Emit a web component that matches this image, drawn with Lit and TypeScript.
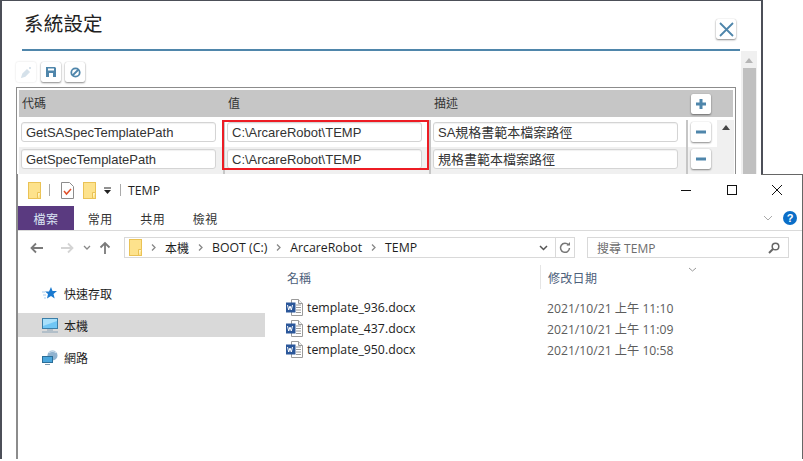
import { LitElement, html, css, svg } from "lit";
import { customElement } from "lit/decorators.js";

const folder = svg`<svg width="13" height="17" viewBox="0 0 13 17"><rect x=".5" y=".5" width="12" height="16" fill="#fde28c" stroke="#eac255"/><path d="M9.5 16.5V10.5H12.5" fill="#fff3c4" stroke="#eac255"/></svg>`;
const word = svg`<svg width="17" height="17" viewBox="0 0 17 17"><path d="M5.5.5h7l4 4v12h-11z" fill="#fff" stroke="#9a9a9a"/><path d="M12.5.5v4h4" fill="#eee" stroke="#9a9a9a"/><path d="M10 6h5M10 8.500h5M10 11h5M10 13.500h5" stroke="#9a9a9a"/><rect y="3.500" width="9.500" height="10" fill="#2b579a"/><path d="M1.500 6l1.200 5 1.300-4 1.300 4 1.200-5" fill="none" stroke="#fff" stroke-width="1"/></svg>`;
const crumb = svg`<svg width="5" height="7" viewBox="0 0 5 7"><path d="M1 .5L4 3.500 1 6.500" fill="none" stroke="#888" stroke-width="1.300"/></svg>`;

@customElement("app-root")
export class AppRoot extends LitElement {
  static styles = css`
    :host { display: block; width: 803px; height: 461px; background: #fff; overflow: hidden; font-family: "Liberation Sans", "Noto Sans CJK TC", sans-serif; }
    .stage { position: relative; width: 803px; height: 461px; }
    svg { display: block; flex: none; }
    .dialog { position: absolute; left: 0; top: 0; width: 759px; height: 458px; background: #fff; border: solid #4c4f58; border-width: 1px 2px 0 2px; }
    .dlg-head { display: flex; justify-content: space-between; align-items: center; height: 48px; margin: 0 21px 0 20px; padding: 0 4px 0 2px; border-bottom: 2px solid #4f86ab; }
    .title { font-size: 19.500px; line-height: 26px; color: #222; letter-spacing: .2px; margin-top: -5px; font-family: "Noto Sans CJK TC", sans-serif; }
    .btn { display: flex; align-items: center; justify-content: center; width: 20px; height: 20px; background: #fff; border-radius: 2px; box-shadow: 0 1px 2px rgba(0,0,0,.45), 0 0 1px rgba(0,0,0,.2); }
    .btn.off { box-shadow: 0 0 2px rgba(0,0,0,.15); }
    .close { margin-top: 8px; }
    .dlg-body { display: flex; }
    .dlg-main { width: 739px; padding: 11px 0 0 14px; box-sizing: border-box; }
    .tools { display: flex; gap: 4.500px; height: 20px; }
    .table { width: 720px; margin-top: 5px; height: 140px; box-sizing: border-box; padding: 2px; border: 1px solid #8c8c8c; border-bottom: 0; }
    .thead, .row { display: grid; grid-template-columns: 204px 206px 257px 31px 17px; }
    .thead { height: 27px; background: #c6c6c6; font-size: 12px; color: #333; align-items: center; margin-bottom: 3px; font-family: "Noto Sans CJK TC", sans-serif; }
    .thead span { padding-bottom: 2px; }
    .thead span:nth-child(1) { padding-left: 3px; }
    .thead span:nth-child(2), .thead span:nth-child(3) { padding-left: 5px; }
    .thead .plus { margin-left: 5px; }
    .row { height: 27px; background: #fff; }
    .row.alt { background: #f0f0f0; }
    .cell { display: flex; align-items: center; padding-left: 2px; padding-bottom: 4px; box-sizing: border-box; }
    .cell + .cell { border-left: 2px solid #c6c6c6; padding-left: 2px; }
    .cell.act { padding-left: 3px; }
    .input { box-sizing: border-box; height: 20px; line-height: 19px; border: 1px solid #d4d4d4; border-radius: 3px; background: #fff; padding-left: 4px; font-size: 13px; color: #333; white-space: nowrap; box-shadow: inset 0 1px 1px rgba(0,0,0,.06); }
    .w1 { width: 195px; }
    .w2 { width: 195px; }
    .w3 { width: 245px; }
    .side { background: #f0f0f0; display: flex; justify-content: center; padding-top: 5px; box-sizing: border-box; }
    .side i, .vbar i { display: block; width: 0; height: 0; border: solid transparent; border-width: 0 4px 5px; border-bottom-color: #444; }
    .vbar { width: 16px; height: 407px; background: #f0f0f0; margin-top: 0; display: flex; flex-direction: column; align-items: center; padding-top: 7px; box-sizing: border-box; }
    .vbar i { border-bottom-color: #b5b5b5; }
    .vbar b { display: block; width: 13px; flex: 1; background: #c0c0c0; margin-top: 5px; }
    .redbox { position: absolute; left: 222px; top: 120px; width: 203px; height: 46px; border: 2px solid #ed1c24; }

    .win { position: absolute; left: 16px; top: 174px; width: 784px; height: 285px; background: #fff; border-left: 2px solid #8c8c8c; border-right: 1px solid #666; font-family: "Open Sans", "Noto Sans CJK TC", sans-serif; font-size: 12px; color: #1e1e1e; }
    .corner { position: absolute; left: 743px; right: -1px; top: 0; height: 1px; background: #666; }
    .titlebar { display: flex; align-items: center; height: 32px; padding-left: 10px; }
    .sep { width: 1px; height: 12px; background: #aaa; }
    .s1 { margin: 0 11px 0 8px; }
    .s2 { margin: 0 7px 0 8px; }
    .doc { margin-right: 9px; }
    .qa { margin-left: 7px; }
    .titlebar .name { font-size: 12.300px; flex: 1; }
    .wc { display: flex; padding-right: 2px; }
    .wc span { display: flex; align-items: center; justify-content: center; width: 45.500px; height: 30px; }
    .tabs { display: flex; align-items: stretch; height: 24px; border-bottom: 1px solid #dadada; color: #333; }
    .tab { width: 52.500px; display: flex; align-items: center; justify-content: center; font-family: "Noto Sans CJK TC", sans-serif; font-size: 12px; letter-spacing: .5px; }
    .tab.active { width: 56px; background: #5a3a80; color: #dbe7f5; }
    .tabs .grow { flex: 1; }
    .ribbon-r { display: flex; align-items: center; gap: 10px; padding-right: 5px; }
    .help { width: 14px; height: 14px; border-radius: 50%; background: #0a6ec8; color: #fff; font: bold 11px/14px "Liberation Sans", sans-serif; text-align: center; }
    .addr-row { display: flex; align-items: center; height: 21px; margin-top: 6px; }
    .nav { display: flex; align-items: center; width: 106px; padding-left: 12px; box-sizing: border-box; }
    .nav .fw { margin-left: 16px; }
    .nav .dn { margin-left: 9px; }
    .nav .up { margin-left: 8px; }
    .addr { display: flex; align-items: center; width: 451px; height: 21px; box-sizing: border-box; border: 1px solid #d9d9d9; padding-left: 4px; font-size: 12.300px; }
    .addr .cjk { font-size: 12px; }
    .addr .chev { margin: 0 9px; }
    .addr .first { margin: 0 9px; }
    .addr .grow { flex: 1; }
    .addr .drop { width: 23px; display: flex; justify-content: center; }
    .addr .ref { width: 18px; height: 19px; border-left: 1px solid #d9d9d9; display: flex; align-items: center; justify-content: center; }
    .search { display: flex; align-items: center; justify-content: space-between; width: 202px; height: 21px; box-sizing: border-box; margin-left: 12px; border: 1px solid #d9d9d9; padding: 0 8px 0 9px; color: #6d6d6d; font-size: 12px; }
    .content { display: flex; margin-top: 7px; }
    .nav-pane { width: 247px; padding-top: 16px; }
    .nitem { display: flex; align-items: center; height: 24px; margin-bottom: 8px; padding-left: 24px; }
    .nitem.sel { background: #d9d9d9; }
    .nitem .ico { width: 22px; display: flex; }
    .nitem span { font-family: "Noto Sans CJK TC", sans-serif; font-size: 12px; }
    .list { flex: 1; padding-left: 21px; }
    .lhead { display: flex; height: 24px; color: #4c607a; position: relative; align-items: center; font-family: "Noto Sans CJK TC", sans-serif; }
    .lhead .n { width: 254px; box-sizing: border-box; padding-left: 1px; }
    .lhead .d { border-left: 1px solid #e5e5e5; padding-left: 7px; height: 24px; display: flex; align-items: center; letter-spacing: .3px; }
    .lhead svg { position: absolute; left: 402px; top: 2px; }
    .files { margin-top: 8px; }
    .entry { display: grid; grid-template-columns: 21px 240px auto; align-items: center; height: 21px; font-size: 12.300px; }
    .entry .dt { color: #5c5c5c; font-size: 12.200px; }
  `;

  private row(a: string, b: string, c: string, alt: boolean, side: boolean) {
    return html`<div class="row ${alt ? "alt" : ""}">
      <div class="cell"><div class="input w1">${a}</div></div>
      <div class="cell"><div class="input w2">${b}</div></div>
      <div class="cell"><div class="input w3">${c}</div></div>
      <div class="cell act"><div class="btn"><svg width="10" height="10" viewBox="0 0 10 10"><rect y="3.500" width="10" height="3" fill="#4f86ab"/></svg></div></div>
      <div class="side">${side ? html`<i></i>` : ""}</div>
    </div>`;
  }

  render() {
    return html`<div class="stage">
      <section class="dialog">
        <header class="dlg-head">
          <div class="title">系統設定</div>
          <div class="btn close"><svg width="15" height="15" viewBox="0 0 15 15"><path d="M1 1l13 13M14 1L1 14" stroke="#4f86ab" stroke-width="1.800"/></svg></div>
        </header>
        <div class="dlg-body">
          <div class="dlg-main">
            <div class="tools">
              <div class="btn off"><svg width="11" height="11" viewBox="0 0 11 11"><path d="M1 10l1-3 4-4 2 2-4 4zM9 0v2M8 1h2" stroke="#d5e1ea" stroke-width="1.500" fill="#d5e1ea"/></svg></div>
              <div class="btn"><svg width="10" height="10" viewBox="0 0 10 10"><path d="M0 0h9l1 1v9H0z" fill="#4f86ab"/><rect x="2" y="1.500" width="6" height="2" fill="#fff"/><rect x="3" y="6" width="4" height="4" fill="#fff"/></svg></div>
              <div class="btn"><svg width="11" height="11" viewBox="0 0 11 11"><circle cx="5.500" cy="5.500" r="4.200" fill="none" stroke="#4f86ab" stroke-width="1.800"/><path d="M2.500 8.500l6-6" stroke="#4f86ab" stroke-width="1.800"/></svg></div>
            </div>
            <div class="table">
              <div class="thead"><span>代碼</span><span>值</span><span>描述</span>
                <div class="btn plus"><svg width="10" height="10" viewBox="0 0 10 10"><path d="M3.500 0h3v3.500H10v3H6.500V10h-3V6.500H0v-3h3.500z" fill="#4f86ab"/></svg></div>
              </div>
              ${this.row("GetSASpecTemplatePath", "C:\\ArcareRobot\\TEMP", "SA規格書範本檔案路徑", false, true)}
              ${this.row("GetSpecTemplatePath", "C:\\ArcareRobot\\TEMP", "規格書範本檔案路徑", true, false)}
            </div>
          </div>
          <div class="vbar"><i></i><b></b></div>
        </div>
      </section>
      <div class="redbox"></div>

      <section class="win">
        <div class="corner"></div>
        <div class="titlebar">
          ${folder}<div class="sep s1"></div>
          <svg class="doc" width="13" height="17" viewBox="0 0 13 17"><path d="M.5.5h8l4 4v12H.5z" fill="#fff" stroke="#8c8c8c"/><path d="M3 9l2.500 3L10 7" fill="none" stroke="#e0502a" stroke-width="1.500"/></svg>
          ${folder}
          <svg class="qa" width="9" height="7" viewBox="0 0 9 7"><path d="M1 1h7" stroke="#222"/><path d="M1 3h7L4.500 7z" fill="#222"/></svg>
          <div class="sep s2"></div>
          <div class="name">TEMP</div>
          <div class="wc">
            <span><svg width="10" height="10" viewBox="0 0 10 10"><path d="M0 5.500h10" stroke="#111"/></svg></span>
            <span><svg width="10" height="10" viewBox="0 0 10 10"><rect x=".5" y=".5" width="9" height="9" fill="none" stroke="#111"/></svg></span>
            <span><svg width="10" height="10" viewBox="0 0 10 10"><path d="M0 0l10 10M10 0L0 10" stroke="#111"/></svg></span>
          </div>
        </div>
        <div class="tabs">
          <div class="tab active">檔案</div><div class="tab">常用</div><div class="tab">共用</div><div class="tab">檢視</div>
          <div class="grow"></div>
          <div class="ribbon-r">
            <svg width="10" height="6" viewBox="0 0 10 6"><path d="M1 1l4 4 4-4" fill="none" stroke="#aaa"/></svg>
            <div class="help">?</div>
          </div>
        </div>
        <div class="addr-row">
          <div class="nav">
            <svg width="14" height="12" viewBox="0 0 14 12"><path d="M13 6H2M6 1.500L1.500 6 6 10.500" fill="none" stroke="#7a7a7a" stroke-width="1.800"/></svg>
            <svg class="fw" width="14" height="12" viewBox="0 0 14 12"><path d="M1 6h11M8 1.500L12.500 6 8 10.500" fill="none" stroke="#d4d4d4" stroke-width="1.800"/></svg>
            <svg class="dn" width="8" height="6" viewBox="0 0 8 6"><path d="M1 1l3 3 3-3" fill="none" stroke="#888" stroke-width="1.300"/></svg>
            <svg class="up" width="12" height="14" viewBox="0 0 12 14"><path d="M6 13V2M1.500 6.500L6 2l4.500 4.500" fill="none" stroke="#7a7a7a" stroke-width="1.800"/></svg>
          </div>
          <div class="addr">
            ${folder}
            <span class="first">${crumb}</span>
            <span class="cjk">本機</span>
            <span class="chev">${crumb}</span>
            <span>BOOT (C:)</span>
            <span class="chev">${crumb}</span>
            <span>ArcareRobot</span>
            <span class="chev">${crumb}</span>
            <span>TEMP</span>
            <div class="grow"></div>
            <div class="drop"><svg width="9" height="6" viewBox="0 0 9 6"><path d="M1 1l3.500 3.500L8 1" fill="none" stroke="#555" stroke-width="1.500"/></svg></div>
            <div class="ref"><svg width="12" height="12" viewBox="0 0 12 12"><path d="M9.500 3A4.500 4.500 0 1 0 10.500 6" fill="none" stroke="#777" stroke-width="1.500"/><path d="M7.500 3.500h3.500V0z" fill="#777"/></svg></div>
          </div>
          <div class="search"><span>搜尋 TEMP</span>
            <svg width="12" height="12" viewBox="0 0 12 12"><circle cx="7.500" cy="4.500" r="3.300" fill="none" stroke="#666" stroke-width="1.500"/><path d="M5 7l-4 4" stroke="#666" stroke-width="2"/></svg>
          </div>
        </div>
        <div class="content">
          <div class="nav-pane">
            <div class="nitem"><div class="ico"><svg width="16" height="14" viewBox="0 0 16 14"><path d="M9 1l1.500 4H15l-3.500 3 1.200 4.500L9 10l-4 2.500L6 8 3 5.500h4z" fill="#1a7ad0"/><path d="M0 6h3M1 9h3M2 12h2" stroke="#a8cdee"/></svg></div><span>快速存取</span></div>
            <div class="nitem sel"><div class="ico"><svg width="16" height="15" viewBox="0 0 16 15"><rect x=".5" y=".5" width="15" height="10" fill="#6fc6f5" stroke="#3a7ea8"/><path d="M1 1h14v2L1 8z" fill="#a8e0fb"/><path d="M5 12h6M0 14h16" stroke="#8aa4b8"/></svg></div><span>本機</span></div>
            <div class="nitem"><div class="ico"><svg width="16" height="15" viewBox="0 0 16 15"><circle cx="10.500" cy="5.500" r="5" fill="#8fb2cf"/><path d="M7 3c2-2 5-2 7 0" fill="none" stroke="#dbe8f2"/><rect x=".5" y="6.500" width="10" height="6" fill="#4aa6dc" stroke="#2b6e98"/><path d="M3 14.500h5" stroke="#7d9bb0"/></svg></div><span>網路</span></div>
          </div>
          <div class="list">
            <div class="lhead"><div class="n">名稱</div><div class="d">修改日期</div>
              <svg width="9" height="5" viewBox="0 0 9 5"><path d="M1 1l3.500 3L8 1" fill="none" stroke="#999"/></svg>
            </div>
            <div class="files">
              <div class="entry">${word}<span>template_936.docx</span><span class="dt">2021/10/21 上午 11:10</span></div>
              <div class="entry">${word}<span>template_437.docx</span><span class="dt">2021/10/21 上午 11:09</span></div>
              <div class="entry">${word}<span>template_950.docx</span><span class="dt">2021/10/21 上午 10:58</span></div>
            </div>
          </div>
        </div>
      </section>
    </div>`;
  }
}
